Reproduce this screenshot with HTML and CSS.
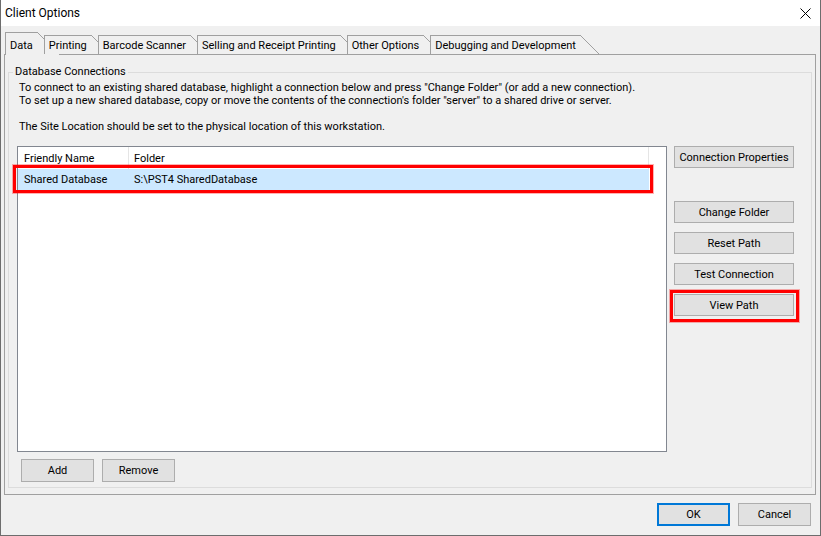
FILE: index.html
```html
<!DOCTYPE html>
<html lang="en">
<head>
  <meta charset="UTF-8">
  <title>Client Options</title>
  <link rel="stylesheet" href="styles.css">
</head>
<body>

  <div class="window">
    <div class="titlebar">
      <span class="title">Client Options</span>
      <svg class="close" width="11" height="11" viewBox="0 0 11 11">
        <path d="M0.5 0.5L10.5 10.5M10.5 0.5L0.5 10.5" stroke="#000" stroke-width="1"/>
      </svg>
    </div>

    <div class="client">
      <!-- Tab strip -->
      <div class="tabs">
        <span class="tab active">Data</span>
        <span class="tab">Printing</span>
        <span class="tab">Barcode Scanner</span>
        <span class="tab">Selling and Receipt Printing</span>
        <span class="tab">Other Options</span>
        <span class="tab">Debugging and Development</span>
      </div>

      <div class="panel">
        <fieldset class="group">
          <legend>Database Connections</legend>
          <p class="info">
            To connect to an existing shared database, highlight a connection below and press "Change Folder" (or add a new connection).<br>
            To set up a new shared database, copy or move the contents of the connection's folder "server" to a shared drive or server.<br>
            <br>
            The Site Location should be set to the physical location of this workstation.
          </p>

          <div class="conn-row">
            <div class="listview">
              <div class="lv-header">
                <span class="col col-name">Friendly Name</span>
                <span class="col col-folder">Folder</span>
              </div>
              <div class="lv-row selected">
                <span class="col col-name">Shared Database</span>
                <span class="col col-folder">S:\PST4 SharedDatabase</span>
                <span class="highlight row-mark"></span>
              </div>
            </div>

            <div class="side-buttons">
              <button class="btn">Connection Properties</button>
              <button class="btn spaced">Change Folder</button>
              <button class="btn">Reset Path</button>
              <button class="btn">Test Connection</button>
              <div class="marked">
                <button class="btn">View Path</button>
                <span class="highlight btn-mark"></span>
              </div>
            </div>
          </div>

          <div class="list-actions">
            <button class="btn small">Add</button>
            <button class="btn small">Remove</button>
          </div>
        </fieldset>
      </div>

      <div class="footer">
        <button class="btn small default">OK</button>
        <button class="btn small">Cancel</button>
      </div>
    </div>
  </div>

</body>
</html>
```

FILE: styles.css
```css
body {
  margin: 0;
  font-family: Roboto, "Segoe UI", sans-serif;
  font-size: 11px;
  color: #000;
  background: #fff;
}

.window {
  width: 821px;
  height: 536px;
  box-sizing: border-box;
  border: 1px solid #6d6d6d;
  border-top: none;
  background: #f0f0f0;
  display: flex;
  flex-direction: column;
}

.titlebar {
  height: 26px;
  flex-shrink: 0;
  background: #fff;
  display: flex;
  align-items: center;
  justify-content: space-between;
  padding: 0 9px 0 4px;
}

.title {
  font-size: 12px;
}

.client {
  flex: 1;
  display: flex;
  flex-direction: column;
  padding: 6px 4px 0 3px;
}

/* tabs */
.tabs {
  display: flex;
  align-items: flex-end;
  height: 22px;
  padding-left: 1px;
  position: relative;
  z-index: 1;
}

.tab {
  position: relative;
  height: 19px;
  line-height: 19px;
  box-sizing: border-box;
  padding: 0 4px 0 4px;
  border-left: 1px solid #a0a0a0;
  border-top: 1px solid #a0a0a0;
  background: #f0f0f0;
  margin-right: 7px;
  white-space: nowrap;
}

.tab::after {
  content: '';
  position: absolute;
  top: -1px;
  left: 100%;
  width: 19px;
  height: 19px;
  background: linear-gradient(to top right, #f0f0f0 calc(50% - 0.7px), #a0a0a0 50%, transparent calc(50% + 0.7px));
}

.tab.active {
  height: 23px;
  margin-bottom: -1px;
  padding-top: 3px;
}

.tab.active::after {
  width: 23px;
  height: 23px;
}

.panel {
  height: 441px;
  box-sizing: border-box;
  border: 1px solid #a0a0a0;
  padding: 10px 3px 5px 3px;
}

.group {
  margin: 0;
  padding: 2px 8px 5px 8px;
  border: 1px solid #dcdcdc;
  min-width: 0;
}

.group legend {
  padding: 0 2px;
  margin-left: -4px;
  line-height: 14px;
}

.info {
  margin: 0 0 13px 2px;
  line-height: 13px;
}

.conn-row {
  display: flex;
  gap: 7px;
}

/* list view */
.listview {
  width: 650px;
  height: 306px;
  box-sizing: border-box;
  border: 1px solid #828790;
  background: #fff;
}

.lv-header, .lv-row {
  display: flex;
  width: 631px;
}

.lv-header {
  height: 22px;
  line-height: 23px;
}

.lv-header .col {
  border-right: 1px solid #e5e5e5;
}

.col {
  box-sizing: border-box;
  white-space: nowrap;
}

.col-name {
  width: 111px;
  padding-left: 6px;
}

.col-folder {
  width: 520px;
  padding-left: 5px;
}

.lv-row {
  position: relative;
  height: 21px;
  line-height: 22px;
}

.lv-row.selected {
  background: #cce8ff;
}

.highlight {
  position: absolute;
  box-sizing: border-box;
  border: 3px solid #f00;
  box-shadow: 0 0 0 1px rgba(255, 0, 0, 0.3);
  pointer-events: none;
}

.row-mark {
  left: -5px;
  top: -4px;
  width: 640px;
  height: 28px;
}

/* buttons */
.btn {
  height: 22px;
  padding: 0;
  box-sizing: border-box;
  border: 1px solid #adadad;
  background: #e1e1e1;
  font-family: inherit;
  font-size: 11px;
  color: #000;
}

.side-buttons {
  display: flex;
  flex-direction: column;
  gap: 9px;
  width: 120px;
}

.side-buttons .btn {
  width: 120px;
}

.side-buttons .spaced {
  margin-top: 24px;
}

.marked {
  position: relative;
  height: 22px;
}

.btn-mark {
  left: -4px;
  top: -4px;
  right: -5px;
  bottom: -6px;
}

.btn.small {
  width: 73px;
  height: 23px;
}

.list-actions {
  display: flex;
  gap: 8px;
  margin: 7px 0 0 4px;
}

.footer {
  display: flex;
  justify-content: flex-end;
  gap: 8px;
  padding: 8px 5px 0 0;
}

.btn.default {
  border: 2px solid #0078d7;
}
```
